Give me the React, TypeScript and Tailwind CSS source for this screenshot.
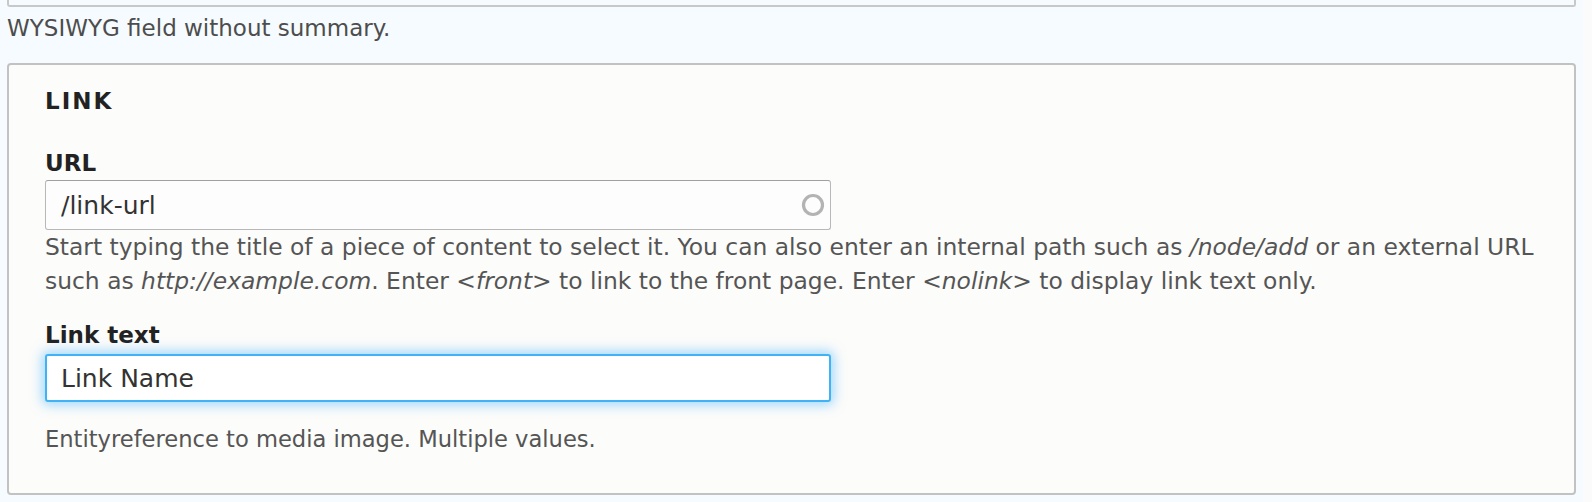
import React from "react";

const font = { fontFamily: '"DejaVu Sans", "Open Sans", sans-serif' };

const Throbber = () => (
  <svg width="24" height="24" viewBox="0 0 24 24" className="absolute right-[6px] top-1/2 -translate-y-1/2">
    <circle cx="12" cy="12" r="9.5" fill="none" stroke="#b3b3b3" strokeWidth="3.2" />
  </svg>
);

const App = () => {
  return (
    <div className="h-[502px] w-full bg-[#fbfbfb] text-[23px]" style={font}>
      <div className="h-[502px] w-[1583px] bg-[#f5fbff]">
        {/* bottom edge of the editor box above */}
        <div className="mx-[7px] h-[7px] rounded-b-[3px] border-x-2 border-b-2 border-[#c8c8c8]" />
        <p className="mt-[4px] pl-[7px] text-[23px] leading-[34px] text-[#4d4d4d]">WYSIWYG field without summary.</p>

        <fieldset className="mx-[7px] mt-[18px] rounded-[4px] border-2 border-[#c2c2c2] bg-[#fcfcfa] px-[36px] pb-[37px] pt-[21px]">
          <h2 className="text-[23px] font-bold uppercase leading-[30px] tracking-[2px] text-[#222]">Link</h2>

          <div className="mt-[32px]">
            <label className="block text-[23px] font-bold leading-[30px] text-[#222]">URL</label>
            <div className="relative mt-[2px] w-[786px]">
              <input
                readOnly
                value="/link-url"
                className="h-[50px] w-full rounded-[3px] border border-[#b8b8b8] border-t-[#a0a0a0] bg-[#fdfdfd] px-[15px] text-[25px] text-[#333] outline-none"
                style={font}
              />
              <Throbber />
            </div>
            <p className="text-[23.4px] leading-[34px] text-[#555]">
              Start typing the title of a piece of content to select it. You can also enter an internal path such as{" "}
              <em>/node/add</em> or an external URL such as <em>http://example.com</em>. Enter <em>&lt;front&gt;</em> to
              link to the front page. Enter <em>&lt;nolink&gt;</em> to display link text only.
            </p>
          </div>

          <div className="mt-[22px]">
            <label className="block text-[23px] font-bold leading-[30px] text-[#222]">Link text</label>
            <input
              readOnly
              value="Link Name"
              className="mt-[4px] h-[48px] w-[786px] rounded-[3px] border-2 border-[#40b3f7] bg-white px-[14px] text-[25px] text-[#333] shadow-[0_0_12px_3px_rgba(70,180,255,0.5)] outline-none"
              style={font}
            />
          </div>

          <p className="mt-[20px] text-[22.6px] leading-[34px] text-[#555]">Entityreference to media image. Multiple values.</p>
        </fieldset>
      </div>
    </div>
  );
};

export default App;
